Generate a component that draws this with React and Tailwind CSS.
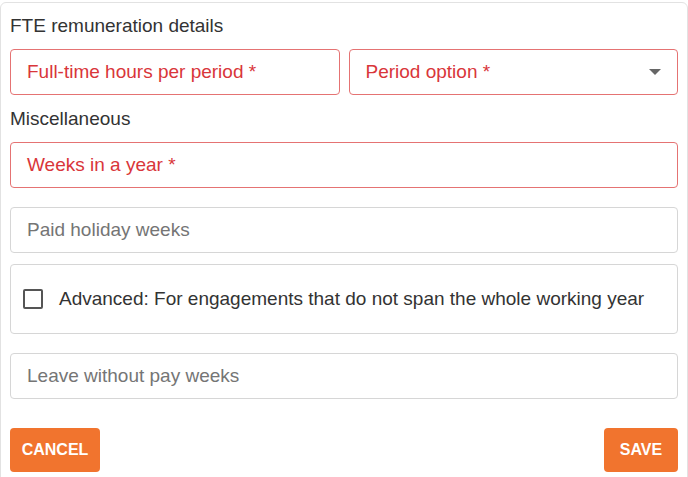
export default function App() {
    return (
        <div className="w-[688px] h-[477px] overflow-hidden bg-white font-['Liberation_Sans',Arial,sans-serif] text-[19px] text-[#333]">
            <div className="mt-[2px] border border-[#e2e2e2] rounded-md px-[9px] pt-[11px] pb-4">
                <p className="leading-6 mb-[11px]">FTE remuneration details</p>
                <div className="flex gap-[9px]">
                    <div className="flex-1 h-[46px] border border-[#e57373] rounded flex items-center px-4 text-[#d9363a]">
                        Full-time hours per period *
                    </div>
                    <div className="flex-1 h-[46px] border border-[#e57373] rounded flex items-center pl-4 pr-[16px] text-[#d9363a]">
                        <span className="flex-1">Period option *</span>
                        <svg width="12" height="6" viewBox="0 0 12 6">
                            <path d="M0 0h12L6 6z" fill="#666" />
                        </svg>
                    </div>
                </div>
                <p className="leading-6 mt-[12px] mb-[11px]">Miscellaneous</p>
                <div className="h-[46px] border border-[#e57373] rounded flex items-center px-4 text-[#d9363a]">
                    Weeks in a year *
                </div>
                <div className="mt-[19px] h-[46px] border border-[#d6d6d6] rounded flex items-center px-4 text-[#757575]">
                    Paid holiday weeks
                </div>
                <div className="mt-[11px] h-[70px] border border-[#d6d6d6] rounded flex items-center pl-3 gap-4">
                    <span className="w-5 h-5 shrink-0 border-2 border-[#555] rounded-[2px]"></span>
                    <span>Advanced: For engagements that do not span the whole working year</span>
                </div>
                <div className="mt-[19px] h-[46px] border border-[#d6d6d6] rounded flex items-center px-4 text-[#757575]">
                    Leave without pay weeks
                </div>
                <div className="mt-[29px] flex justify-between">
                    <button className="h-11 w-[90px] rounded bg-[#f1742e] text-white font-bold text-[16px] leading-none">CANCEL</button>
                    <button className="h-11 w-[74px] rounded bg-[#f1742e] text-white font-bold text-[16px] leading-none">SAVE</button>
                </div>
            </div>
        </div>
    );
}
